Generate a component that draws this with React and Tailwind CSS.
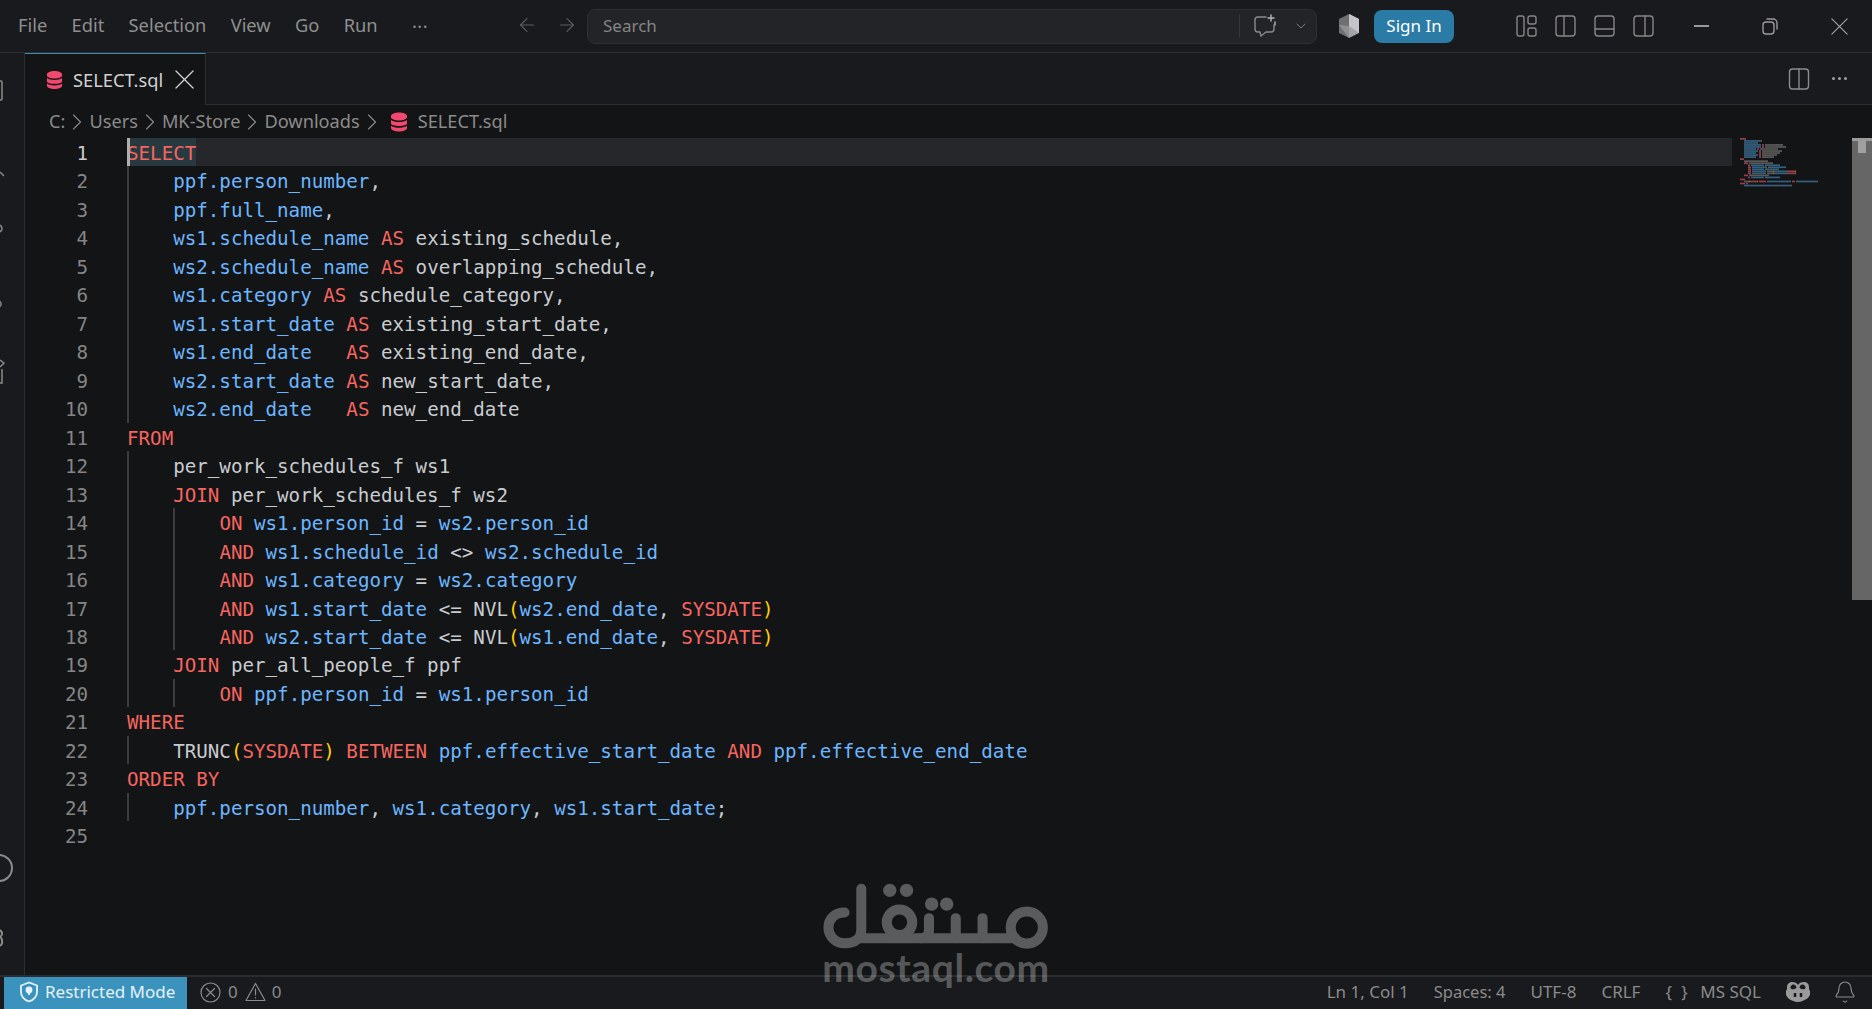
import React from 'react'
import { ChevronDown, ArrowLeft, ArrowRight, Bell } from 'lucide-react'

const UI_FONT = { fontFamily: '"Noto Sans", sans-serif' }

const CODE = [
  'SELECT',
  '    ppf.person_number,',
  '    ppf.full_name,',
  '    ws1.schedule_name AS existing_schedule,',
  '    ws2.schedule_name AS overlapping_schedule,',
  '    ws1.category AS schedule_category,',
  '    ws1.start_date AS existing_start_date,',
  '    ws1.end_date   AS existing_end_date,',
  '    ws2.start_date AS new_start_date,',
  '    ws2.end_date   AS new_end_date',
  'FROM',
  '    per_work_schedules_f ws1',
  '    JOIN per_work_schedules_f ws2',
  '        ON ws1.person_id = ws2.person_id',
  '        AND ws1.schedule_id <> ws2.schedule_id',
  '        AND ws1.category = ws2.category',
  '        AND ws1.start_date <= NVL(ws2.end_date, SYSDATE)',
  '        AND ws2.start_date <= NVL(ws1.end_date, SYSDATE)',
  '    JOIN per_all_people_f ppf',
  '        ON ppf.person_id = ws1.person_id',
  'WHERE',
  '    TRUNC(SYSDATE) BETWEEN ppf.effective_start_date AND ppf.effective_end_date',
  'ORDER BY',
  '    ppf.person_number, ws1.category, ws1.start_date;',
  '',
]

const TOKEN = /(\b(?:SELECT|FROM|JOIN|ON|AND|AS|WHERE|ORDER|BY|BETWEEN|SYSDATE)\b)|(\b\w+\.\w+\b)|([()])|(\s+|.)/g
const TOKEN_CLASS = {
  k: 'text-[#f6655f]',
  b: 'text-[#6cb6ff]',
  y: 'text-[#ffd000]',
  p: 'text-[#c8ccd0]',
}
const MINI_COLOR = { k: '#93404a', b: '#35607f', y: '#8f7a20', p: '#5a5a5a' }

function tokenize(text) {
  const out = []
  for (const m of text.matchAll(TOKEN)) {
    const kind = m[1] ? 'k' : m[2] ? 'b' : m[3] ? 'y' : 'p'
    const last = out[out.length - 1]
    if (last && last.kind === kind && kind === 'p') last.text += m[0]
    else out.push({ kind, text: m[0] })
  }
  return out
}

function splitIndent(line) {
  const spaces = line.match(/^ */)[0].length
  return { depth: spaces / 4, body: line.slice(spaces) }
}

function SqlIcon({ className }) {
  return (
    <svg viewBox="0 0 18 20" className={className} fill="#f2486f">
      <path d="M1 4c0-2 4-3.500 8-3.500S17 2 17 4v1.500c0 1.500-4 3-8 3s-8-1.500-8-3z" />
      <path d="M1 8c2 1.500 5 2 8 2s6-.5 8-2v3.500c0 1.500-4 2.500-8 2.500s-8-1-8-2.500z" />
      <path d="M1 13.800c2 1.500 5 2 8 2s6-.5 8-2V16c0 2-4 3.500-8 3.500S1 18 1 16z" />
    </svg>
  )
}

function Stroke({ className, children, viewBox = '0 0 22 22', width = 1.4 }) {
  return (
    <svg viewBox={viewBox} className={className} fill="none" stroke="currentColor" strokeWidth={width} strokeLinecap="round" strokeLinejoin="round">
      {children}
    </svg>
  )
}

function Cross({ className, width = 1.3 }) {
  return (
    <Stroke className={className} viewBox="0 0 20 20" width={width}>
      <path d="M1 1l18 18M19 1 1 19" />
    </Stroke>
  )
}

function TitleBar() {
  return (
    <div className="h-[53px] shrink-0 flex items-center bg-[#181a1d] border-b border-[#2c2e31] text-[#8f8f8f] text-[18.3px]">
      <div className="flex items-center pl-[18px] pb-[2px] gap-[24.3px] w-[587px]">
        <span>File</span>
        <span>Edit</span>
        <span>Selection</span>
        <span>View</span>
        <span>Go</span>
        <span>Run</span>
        <span className="ml-[10px] text-[#8f8f8f] tracking-[0.5px] leading-none -mt-[8px]">...</span>
        <ArrowLeft className="ml-[64px] w-[22px] h-[22px] text-[#5c5c5c]" strokeWidth={1.300} />
        <ArrowRight className="ml-[-7px] w-[22px] h-[22px] text-[#5c5c5c]" strokeWidth={1.300} />
      </div>
      <div className="w-[730px] h-[35px] flex items-center rounded-[8px] bg-[#222427] border border-[#2d2f32] pl-[15px] pr-[7px]">
        <span className="flex-1 text-[#858585] text-[17px]">Search</span>
        <div className="w-px h-[24px] bg-[#33353a]" />
        <Stroke className="ml-[12px] w-[26px] h-[26px] text-[#8a8a8a]" viewBox="0 0 26 26">
          <path d="M14 4H6a3 3 0 0 0-3 3v9a3 3 0 0 0 3 3h2l1 4 5-4h5a3 3 0 0 0 3-3v-4" />
          <path d="M19 2v6M16 5h6M23 9v3" stroke="#b5b5b5" />
        </Stroke>
        <ChevronDown className="ml-[15px] w-[16px] h-[16px] text-[#8a8a8a]" strokeWidth={1.300} />
      </div>
      <svg viewBox="0 0 24 26" className="ml-[20px] w-[24px] h-[26px]">
        <path d="M12 1 2 6v14l10 5z" fill="#6f6f6f" />
        <path d="M12 1l10 5v14l-10 5z" fill="#a3a3a8" />
        <path d="M2 12l10 13V13z" fill="#909090" />
        <path d="M12 1v12l10 7V6z" fill="#c4c4ca" />
      </svg>
      <button className="ml-[13px] w-[80px] h-[33px] rounded-[8px] bg-[#2a7ba6] text-white text-[17px]">Sign In</button>
      <div className="ml-[62px] flex items-center gap-[18px] text-[#868686]">
        <Stroke className="w-[21px] h-[22px]" viewBox="0 0 21 22">
          <rect x="1" y="1" width="7" height="20" rx="2" />
          <rect x="12" y="1" width="8" height="8" rx="2" />
          <rect x="12" y="13" width="8" height="8" rx="2" />
        </Stroke>
        <Stroke className="w-[21px] h-[22px]" viewBox="0 0 21 22">
          <rect x="1" y="1" width="19" height="20" rx="3" />
          <path d="M9 1v20" />
        </Stroke>
        <Stroke className="w-[21px] h-[22px]" viewBox="0 0 21 22">
          <rect x="1" y="1" width="19" height="20" rx="3" />
          <path d="M1 14h19" />
        </Stroke>
        <Stroke className="w-[21px] h-[22px]" viewBox="0 0 21 22">
          <rect x="1" y="1" width="19" height="20" rx="3" />
          <path d="M12 1v20" />
        </Stroke>
      </div>
      <div className="ml-[40px] w-[15px] h-[2px] bg-[#9a9a9a]" />
      <Stroke className="ml-[51px] w-[20px] h-[20px] text-[#9a9a9a]" viewBox="0 0 20 20">
        <rect x="3" y="6" width="11" height="12" rx="3" />
        <path d="M7 3h6a4 4 0 0 1 4 4v6" />
      </Stroke>
      <Cross className="ml-[51px] w-[17px] h-[17px] text-[#a5a5a5]" />
    </div>
  )
}

function TabRow() {
  return (
    <div className="h-[52px] shrink-0 flex bg-[#181a1d] border-b border-[#2c2e31]">
      <div className="w-[181px] h-[52px] flex items-center pl-[21px] bg-[#131416] border-t border-t-[#3a8fb8] border-r border-r-[#2c2e31]">
        <SqlIcon className="w-[17px] h-[20px]" />
        <span className="ml-[10px] text-[#d2d2d2] text-[18.3px]">SELECT.sql</span>
        <Cross className="ml-[12px] w-[19px] h-[19px] text-[#d6d6d6]" />
      </div>
      <div className="flex-1 flex items-center justify-end pr-[24px] text-[#8c8c8c]">
        <Stroke className="w-[22px] h-[22px]" viewBox="0 0 21 22">
          <rect x="1" y="1" width="19" height="20" rx="3" />
          <path d="M10.500 1v20" />
        </Stroke>
        <span className="ml-[22px] mr-[1px] flex gap-[3px]">
          <i className="w-[3px] h-[3px] rounded-full bg-[#a0a0a0]" />
          <i className="w-[3px] h-[3px] rounded-full bg-[#a0a0a0]" />
          <i className="w-[3px] h-[3px] rounded-full bg-[#a0a0a0]" />
        </span>
      </div>
    </div>
  )
}

function Crumb() {
  return <Stroke className="w-[10px] h-[18px] mx-[7px] text-[#8b8b8b]" viewBox="0 0 10 18" width={1.100}><path d="M1.500 2l7 7-7 7" /></Stroke>
}

function Breadcrumbs() {
  return (
    <div className="h-[33px] shrink-0 flex items-center pl-[24px] pt-[1px] bg-[#131416] text-[#8b8b8b] text-[18.2px]">
      <span>C:</span>
      <Crumb />
      <span>Users</span>
      <Crumb />
      <span>MK-Store</span>
      <Crumb />
      <span>Downloads</span>
      <Crumb />
      <SqlIcon className="ml-[6px] w-[18px] h-[20px]" />
      <span className="ml-[10px]">SELECT.sql</span>
    </div>
  )
}

function CodeLine({ line, index }) {
  const { depth, body } = splitIndent(line)
  const active = index === 0
  return (
    <div className={`flex h-[28.47px] items-stretch ${active ? 'bg-[#25272a]' : ''}`}>
      <div className={`shrink-0 w-[63px] bg-[#131416] text-right ${active ? 'text-[#cccccc]' : 'text-[#858585]'}`}>
        {index + 1}
      </div>
      <div className="shrink-0 w-[39px] bg-[#131416]" />
      {Array.from({ length: depth }).map((_, i) => (
        <div key={i} className="shrink-0 w-[46.2px] border-l-2 border-[#3c3c3c]" />
      ))}
      <div className={`relative whitespace-pre ${active ? 'bg-[#28393f]' : ''}`}>
        {active && <div className="absolute left-0 top-0 bottom-0 w-[3px] bg-[#aeafad]" />}
        {tokenize(body).map((t, i) => (
          <span key={i} className={TOKEN_CLASS[t.kind]}>{t.text}</span>
        ))}
      </div>
    </div>
  )
}

function Minimap() {
  const rects = []
  CODE.forEach((line, row) => {
    let x = 8
    tokenize(line).forEach((t, i) => {
      const lead = t.text.match(/^ */)[0].length
      const len = t.text.length - lead
      if (len > 0) rects.push(<rect key={`${row}-${i}`} x={x + lead} y={row * 2.030} width={len} height={1.700} fill={MINI_COLOR[t.kind]} />)
      x += t.text.length
    })
  })
  return (
    <svg viewBox="0 0 120 837" className="shrink-0 w-[120px] h-[837px]">
      {rects}
    </svg>
  )
}

function Scrollbar() {
  return (
    <div className="shrink-0 w-[20px] h-full">
      <div className="h-[462px] bg-[#666666] flex flex-col items-center">
        <div className="w-full h-[3px] bg-[#9c9c9c]" />
        <div className="w-[8px] h-[12px] bg-[#a0a0a0]" />
      </div>
    </div>
  )
}

function ActivityBar() {
  return (
    <div className="shrink-0 w-[25px] bg-[#181a1d] border-r border-[#2c2e31] text-[#8a8a8a]">
      <svg viewBox="0 0 24 922" className="w-[24px] h-[922px]" fill="none" stroke="currentColor" strokeWidth="1.500">
        <path d="M-3 28H1a1 1 0 0 1 1 1v17a1 1 0 0 1-1 1H-3" />
        <path d="M0 119l4 4" />
        <path d="M-2 172a3.500 3.500 0 0 1 4 3.500 3.500 3.500 0 0 1-4 3.500" />
        <path d="M-2 248a3 3 0 0 1 0 6" />
        <path d="M0 307l4 3-4 4M2 316v14H-2" />
        <path d="M-1 802a12 12 0 0 1 0 26" strokeWidth="2" />
        <path d="M-1 877a4 4 0 0 1 3 4 4 4 0 0 1-2 3 4 4 0 0 1 2 4 4 4 0 0 1-3 5" strokeWidth="2" />
      </svg>
    </div>
  )
}

function Watermark() {
  return (
    <div className="absolute left-[823px] top-[883px] w-[226px] flex flex-col items-center pointer-events-none text-white/30">
      <svg viewBox="130 75 672 200" className="w-[226px] h-[67px]" fill="none" stroke="#5a5b5d" strokeWidth="30" strokeLinecap="round" strokeLinejoin="round">
        <path d="M193 163c-30 0-48 20-48 45s20 47 50 47c30 0 48-15 48-40V92" />
        <path d="M243 240h460" />
        <circle cx="357" cy="192" r="38" />
        <path d="M445 180v35c0 15-10 25-25 25M525 180v60M605 180v60" />
        <circle cx="737" cy="208" r="48" />
        <g fill="#5a5b5d" stroke="none">
          <circle cx="328" cy="97" r="20" />
          <circle cx="378" cy="97" r="20" />
          <circle cx="453" cy="138" r="20" />
          <circle cx="498" cy="138" r="20" />
        </g>
      </svg>
      <span className="font-bold text-[39px] leading-[36px] -mt-[1px] tracking-[0.6px]" style={{ fontFamily: 'Lato, sans-serif' }}>mostaql.com</span>
    </div>
  )
}

function StatusBar() {
  return (
    <div className="h-[34px] shrink-0 flex items-start bg-[#181a1d] border-t-2 border-[#2a2c2f] text-[#8b8b8b] text-[17px]">
      <div className="ml-[4px] w-[183px] h-[32px] flex items-center pl-[15px] pb-[2px] bg-[#3a92bd] text-[#e6f3fa]">
        <svg viewBox="0 0 20 22" className="w-[20px] h-[22px]" fill="none" stroke="currentColor" strokeWidth="1.800">
          <path d="M10 1.500 2 4.500v6c0 5 3.500 8.500 8 10 4.500-1.500 8-5 8-10v-6z" />
          <circle cx="10" cy="9" r="2.500" fill="currentColor" />
          <path d="M10 10v4" />
        </svg>
        <span className="ml-[6px]">Restricted Mode</span>
      </div>
      <div className="h-[32px] flex items-center pb-[2px]">
        <Stroke className="ml-[13px] w-[21px] h-[21px]" viewBox="0 0 21 21" width={1.200}>
          <circle cx="10.500" cy="10.500" r="9.500" />
          <path d="M6.500 6.500l8 8M14.500 6.500l-8 8" />
        </Stroke>
        <span className="ml-[7px]">0</span>
        <Stroke className="ml-[7px] w-[21px] h-[20px]" viewBox="0 0 21 20" width={1.200}>
          <path d="M10.500 1.500 20 18.500H1z" />
          <path d="M10.500 7v6M10.500 15.500v.5" />
        </Stroke>
        <span className="ml-[6px]">0</span>
      </div>
      <div className="flex-1" />
      <div className="h-[32px] flex items-center pb-[2px]">
        <span>Ln 1, Col 1</span>
        <span className="ml-[25px] text-[16.5px]">Spaces: 4</span>
        <span className="ml-[25px]">UTF-8</span>
        <span className="ml-[25px]">CRLF</span>
        <span className="ml-[25px] tracking-[2.5px]">{'{ }'}</span>
        <span className="ml-[10px]">MS SQL</span>
        <svg viewBox="0 0 24 22" className="ml-[25px] w-[24px] h-[22px]" fill="#9a9a9a">
          <path d="M6 1c3 0 5 1 6 3 1-2 3-3 6-3 3.500 0 5 2.500 5 5v2l1 2v4l-2 3c-3 2-7 4-10 4s-8-2-10-4l-2-3v-4l1-2V6c0-2.500 2-5 5-5z" />
          <path d="M6 4c2-1 4 0 4.500 2.500-1 2-5 2.500-6 .5C4 6 5 5 6 4zM18 4c-2-1-4 0-4.500 2.500 1 2 5 2.500 6 .5.500-1-.5-2-1.500-3z" fill="#181a1d" />
          <path d="M9 12v4M15 12v4" stroke="#181a1d" strokeWidth="2.500" />
        </svg>
        <Bell className="ml-[23px] mr-[15px] w-[24px] h-[24px]" strokeWidth={1.100} />
      </div>
    </div>
  )
}

export default function App() {
  return (
    <div className="relative w-[1872px] h-[1009px] flex flex-col overflow-hidden bg-[#131416]" style={UI_FONT}>
      <TitleBar />
      <div className="flex-1 min-h-0 flex">
        <ActivityBar />
        <div className="flex-1 min-w-0 flex flex-col">
          <TabRow />
          <Breadcrumbs />
          <div className="flex-1 min-h-0 flex overflow-hidden">
            <div className="flex-1 min-w-0 text-[19.18px] leading-[31px] font-medium" style={{ fontFamily: '"DejaVu Sans Mono", monospace' }}>
              {CODE.map((line, i) => <CodeLine key={i} line={line} index={i} />)}
            </div>
            <Minimap />
            <Scrollbar />
          </div>
        </div>
      </div>
      <StatusBar />
      <Watermark />
    </div>
  )
}
